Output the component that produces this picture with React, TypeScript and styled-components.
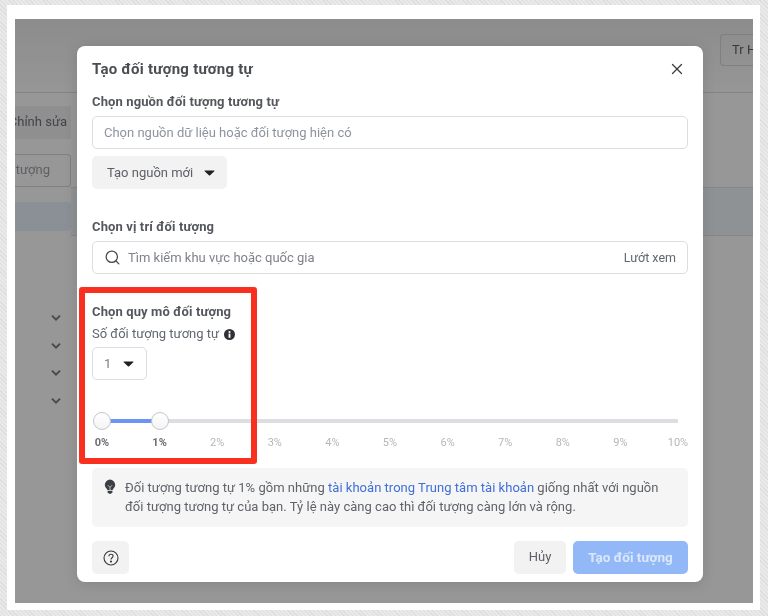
import React from "react";
import styled, { createGlobalStyle } from "styled-components";
import { Search, X } from "lucide-react";

const GlobalStyle = createGlobalStyle`
  html, body {
    margin: 0;
    padding: 0;
    height: 100%;
  }
  body {
    font-family: Roboto, "Liberation Sans", sans-serif;
    background-color: #e4e4e4;
    background-image: repeating-linear-gradient(45deg, #dedede 0 1px, #e9e9e9 1px 3px);
    overflow: hidden;
  }
`;

const TICKS = [0, 1, 2, 3, 4, 5, 6, 7, 8, 9, 10];

const Caret = () => (
  <CaretSvg viewBox="0 0 12 7">
    <path d="M0.8 0.6h10.4c.5 0 .8.6.4 1L6.7 6.2c-.4.4-1 .4-1.4 0L.4 1.6c-.4-.4-.1-1 .4-1z" />
  </CaretSvg>
);

const Chevron = () => (
  <svg width="12" height="8" viewBox="0 0 12 8" fill="none">
    <path d="M2 1.6 6 5.6 10 1.6" stroke="#4a4a4c" strokeWidth="2" />
  </svg>
);

export default function App() {
  return (
    <>
      <GlobalStyle />
      <Frame>
        <Stage>
          <PageHeader>
            <HeaderButton>Tr H</HeaderButton>
          </PageHeader>
          <PageBody>
            <SideColumn>
              <EditBar>
                <span>Chỉnh sửa</span>
              </EditBar>
              <SearchStub>tượng</SearchStub>
              <SelectedStub />
              <ChevronList>
                <Chevron />
                <Chevron />
                <Chevron />
                <Chevron />
              </ChevronList>
            </SideColumn>
            <MainColumn>
              <TableBand />
            </MainColumn>
          </PageBody>

          <Modal>
            <ModalHeader>
              <ModalTitle>Tạo đối tượng tương tự</ModalTitle>
              <CloseButton>
                <X size={18} strokeWidth={1.7} />
              </CloseButton>
            </ModalHeader>

            <SectionLabel>Chọn nguồn đối tượng tương tự</SectionLabel>
            <Field>
              <Placeholder>Chọn nguồn dữ liệu hoặc đối tượng hiện có</Placeholder>
            </Field>
            <SourceButton>
              Tạo nguồn mới
              <Caret />
            </SourceButton>

            <LocationLabel>Chọn vị trí đối tượng</LocationLabel>
            <Field>
              <Search size={17} strokeWidth={1.8} color="#444950" />
              <SearchText>Tìm kiếm khu vực hoặc quốc gia</SearchText>
              <Browse>Lướt xem</Browse>
            </Field>

            <SizeLabel>Chọn quy mô đối tượng</SizeLabel>
            <CountLabel>
              Số đối tượng tương tự
              <svg width="11" height="11" viewBox="0 0 12 12">
                <circle cx="6" cy="6" r="6" fill="#2f3136" />
                <rect x="5" y="5" width="2" height="4.6" fill="#fff" />
                <circle cx="6" cy="3.2" r="1.15" fill="#fff" />
              </svg>
            </CountLabel>
            <CountSelect>
              <span>1</span>
              <Caret />
            </CountSelect>

            <Slider>
              <Track>
                <TrackFill style={{ width: `${(1 / 10) * 100}%` }} />
                <Thumb style={{ left: "0%" }} />
                <Thumb style={{ left: "10%" }} />
              </Track>
              <TickRow>
                {TICKS.map((tick) => (
                  <Tick key={tick} $active={tick < 2}>
                    {tick}%
                  </Tick>
                ))}
              </TickRow>
            </Slider>

            <Notice>
              <svg width="12" height="16" viewBox="0 0 13 17">
                <path
                  d="M6.5.5A5.6 5.6 0 0 0 .9 6.1c0 2 1 3.1 1.8 4.1.5.6.9 1.2 1 1.8h5.6c.1-.6.5-1.2 1-1.8.8-1 1.8-2.1 1.8-4.1A5.6 5.6 0 0 0 6.5.5z"
                  fill="#3b3e44"
                />
                <path d="M4.3 6.6 6.5 9l2.2-2.4M6.5 9v3" stroke="#e8e8e8" strokeWidth=".8" fill="none" />
                <path d="M3.9 12.9h5.2v1.5c0 .5-.4.9-.9.9h-.5c-.2.6-.7.9-1.2.9s-1-.3-1.2-.9h-.5c-.5 0-.9-.4-.9-.9z" fill="#3b3e44" />
              </svg>
              <NoticeText>
                Đối tượng tương tự 1% gồm những <NoticeLink>tài khoản trong Trung tâm tài khoản</NoticeLink> giống
                nhất với nguồn đối tượng tương tự của bạn. Tỷ lệ này càng cao thì đối tượng càng lớn và rộng.
              </NoticeText>
            </Notice>

            <Footer>
              <HelpButton>
                <svg width="16" height="16" viewBox="0 0 16 16" fill="none" stroke="#36383d" strokeWidth="1.1">
                  <circle cx="8" cy="8" r="7" />
                  <path d="M5.9 6.2c0-1.2 1-2 2.1-2s2.1.8 2.1 1.9c0 1.6-2.1 1.6-2.1 3.3" />
                  <circle cx="8" cy="11.6" r=".5" fill="#36383d" />
                </svg>
              </HelpButton>
              <FooterActions>
                <CancelButton>Hủy</CancelButton>
                <CreateButton>Tạo đối tượng</CreateButton>
              </FooterActions>
            </Footer>
          </Modal>

          <Highlight />
        </Stage>
      </Frame>
    </>
  );
}

const Frame = styled.div`
  margin: 5px 8px 0 7px;
  height: 605px;
  box-sizing: border-box;
  padding: 14px 7px 7px 8px;
  background: #fff;
  filter: blur(0.5px);
`;

const Stage = styled.div`
  position: relative;
  height: 584px;
  background: #979797;
  overflow: hidden;
  color: #4b4f56;
`;

const PageHeader = styled.div`
  height: 74px;
  box-sizing: border-box;
  border-bottom: 1px solid #848484;
  background: linear-gradient(#8c8c8c, #969696);
  display: flex;
  justify-content: flex-end;
  align-items: flex-start;
  padding-top: 15px;
`;

const HeaderButton = styled.div`
  width: 33px;
  height: 32px;
  box-sizing: border-box;
  border: 1px solid #7f7f7f;
  border-right: none;
  border-radius: 4px 0 0 4px;
  padding-left: 11px;
  font-size: 13px;
  line-height: 30px;
  white-space: nowrap;
  overflow: hidden;
  color: #35383c;
`;

const PageBody = styled.div`
  display: flex;
`;

const SideColumn = styled.div`
  width: 56px;
  padding-top: 13px;
  display: flex;
  flex-direction: column;
`;

const EditBar = styled.div`
  height: 33px;
  background: #8f8f8f;
  font-size: 13px;
  line-height: 32px;
  color: #42444a;
  overflow: hidden;
  white-space: nowrap;
  display: flex;
  justify-content: flex-end;
  padding-right: 4px;
`;

const SearchStub = styled.div`
  height: 33px;
  margin-top: 15px;
  box-sizing: border-box;
  border: 1px solid #808080;
  border-left: none;
  border-radius: 0 4px 4px 0;
  font-size: 13px;
  line-height: 30px;
  color: #5d5f63;
  text-align: right;
  padding-right: 20px;
`;

const SelectedStub = styled.div`
  height: 29px;
  margin-top: 15px;
  background: #8b9096;
  border-radius: 0 4px 4px 0;
`;

const ChevronList = styled.div`
  margin-top: 83px;
  display: flex;
  flex-direction: column;
  align-items: flex-start;
  gap: 19.5px;
  padding-left: 35px;
`;

const MainColumn = styled.div`
  flex: 1;
  padding-top: 94px;
`;

const TableBand = styled.div`
  height: 49px;
  background: #8e9295;
  border-top: 1px solid #868686;
  border-bottom: 1px solid #868686;
  box-sizing: border-box;
`;

const Modal = styled.div`
  position: absolute;
  left: 62px;
  top: 27px;
  width: 626px;
  height: 536px;
  box-sizing: border-box;
  padding: 0 15px;
  background: #fff;
  border-radius: 8px;
  box-shadow: 0 2px 14px rgba(0, 0, 0, 0.12);
  display: flex;
  flex-direction: column;
`;

const ModalHeader = styled.div`
  height: 46px;
  display: flex;
  align-items: center;
  justify-content: space-between;
  flex: none;
`;

const ModalTitle = styled.div`
  font-size: 15px;
  font-weight: 700;
  letter-spacing: 0.25px;
  color: #4a4d52;
`;

const CloseButton = styled.div`
  display: flex;
  color: #3a3c40;
  margin-right: 2px;
`;

const SectionLabel = styled.div`
  font-size: 13px;
  font-weight: 700;
  letter-spacing: 0.12px;
  line-height: 16px;
  color: #54575d;
  margin-top: 2px;
`;

const Field = styled.div`
  margin-top: 6px;
  height: 33px;
  flex: none;
  box-sizing: border-box;
  border: 1px solid #dcdde0;
  border-radius: 5px;
  display: flex;
  align-items: center;
  padding: 0 11px;
  font-size: 13px;
`;

const Placeholder = styled.span`
  color: #8d949e;
`;

const SearchText = styled.span`
  margin-left: 7px;
  color: #7e8289;
`;

const Browse = styled.span`
  margin-left: auto;
  font-size: 12.5px;
  color: #606770;
`;

const SourceButton = styled.div`
  margin-top: 7px;
  width: 135px;
  height: 33px;
  flex: none;
  box-sizing: border-box;
  border-radius: 5px;
  background: #f2f2f2;
  display: flex;
  align-items: center;
  justify-content: space-between;
  padding: 0 12px 0 15px;
  font-size: 13px;
  color: #5d6066;
`;

const CaretSvg = styled.svg`
  width: 11px;
  height: 6px;
  fill: #1f2023;
  flex: none;
`;

const LocationLabel = styled(SectionLabel)`
  margin-top: 30px;
`;

const SizeLabel = styled(SectionLabel)`
  margin-top: 30px;
`;

const CountLabel = styled.div`
  margin-top: 6px;
  font-size: 13px;
  line-height: 16px;
  color: #606770;
  display: flex;
  align-items: center;
  gap: 5px;
`;

const CountSelect = styled.div`
  margin-top: 5px;
  width: 55px;
  height: 33px;
  flex: none;
  box-sizing: border-box;
  border: 1px solid #dcdde0;
  border-radius: 5px;
  display: flex;
  align-items: center;
  justify-content: space-between;
  padding: 0 12px 0 11px;
  font-size: 13px;
  color: #7a7e85;
`;

const Slider = styled.div`
  margin-top: 39px;
`;

const Track = styled.div`
  position: relative;
  margin: 0 10px;
  height: 4px;
  background: #dddee3;
`;

const TrackFill = styled.div`
  height: 100%;
  background: #6c94f5;
`;

const Thumb = styled.div`
  position: absolute;
  top: 50%;
  width: 18px;
  height: 18px;
  box-sizing: border-box;
  transform: translate(-50%, -50%);
  border: 1px solid #c4c6cb;
  border-radius: 50%;
  background: linear-gradient(#fff, #f4f4f4);
`;

const TickRow = styled.div`
  margin-top: 13px;
  display: flex;
  justify-content: space-between;
`;

const Tick = styled.span<{ $active: boolean }>`
  width: 20px;
  white-space: nowrap;
  font-size: 11px;
  line-height: 14px;
  font-weight: ${(p) => (p.$active ? 700 : 400)};
  color: ${(p) => (p.$active ? "#6b6e74" : "#b4b6ba")};
  display: flex;
  justify-content: center;
`;

const Notice = styled.div`
  margin-top: 18px;
  height: 59px;
  flex: none;
  box-sizing: border-box;
  border-radius: 5px;
  background: #f5f5f5;
  padding: 11px 12px;
  display: flex;
  gap: 8px;
`;

const NoticeText = styled.div`
  font-size: 13px;
  line-height: 18.5px;
  letter-spacing: 0.02px;
  color: #5f6369;
  width: 540px;
  margin-left: 1px;
`;

const NoticeLink = styled.span`
  color: #3f6fd8;
`;

const Footer = styled.div`
  margin-top: 14px;
  display: flex;
  justify-content: space-between;
`;

const HelpButton = styled.div`
  width: 37px;
  height: 33px;
  border-radius: 5px;
  background: #f2f2f2;
  display: flex;
  align-items: center;
  justify-content: center;
`;

const FooterActions = styled.div`
  display: flex;
  gap: 7px;
`;

const CancelButton = styled.div`
  width: 52px;
  height: 33px;
  border-radius: 5px;
  background: #f2f2f2;
  font-size: 13px;
  line-height: 32px;
  text-align: center;
  color: #5d6066;
`;

const CreateButton = styled.div`
  width: 115px;
  height: 33px;
  border-radius: 5px;
  background: #93b8f7;
  font-size: 13.5px;
  font-weight: 700;
  line-height: 32px;
  text-align: center;
  color: #dbe7fb;
`;

const Highlight = styled.div`
  position: absolute;
  left: 64px;
  top: 268px;
  width: 178px;
  height: 177px;
  box-sizing: border-box;
  border: 6px solid #f93020;
  border-radius: 3px;
  pointer-events: none;
`;
